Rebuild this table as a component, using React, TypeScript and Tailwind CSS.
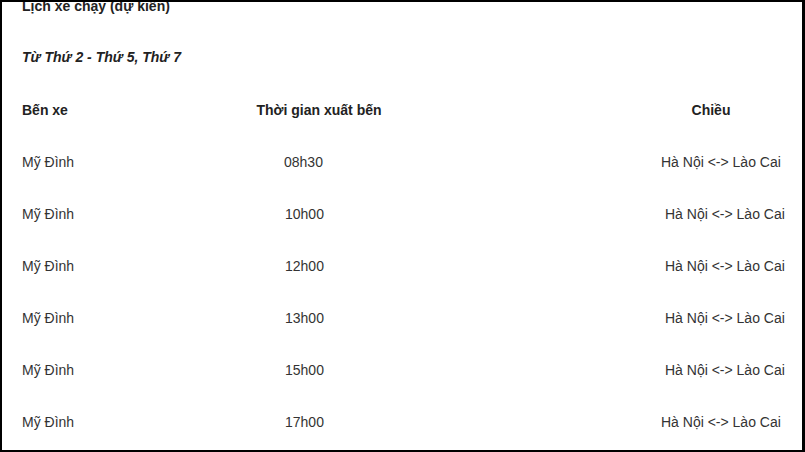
import React from "react";

const rows = [
  { time: "08h30", shift: false },
  { time: "10h00", shift: true },
  { time: "12h00", shift: true },
  { time: "13h00", shift: true },
  { time: "15h00", shift: true },
  { time: "17h00", shift: false },
];

export default function App() {
  return (
    <div
      className="w-[805px] h-[452px] overflow-hidden bg-white border-l-2 border-t-2 border-r-[3px] border-b-2 border-black text-[14px] text-[#333]"
      style={{ fontFamily: '"Liberation Sans", Arial, sans-serif' }}
    >
      <div className="pl-[20px] -mt-[6px] leading-5 font-bold text-[#222]">
        Lịch xe chạy (dự kiến)
      </div>
      <div className="pl-[20px] mt-[31px] leading-5 font-bold italic text-[#222]">
        Từ Thứ 2 - Thứ 5, Thứ 7
      </div>
      <div className="flex pl-[20px] mt-[33px] leading-5 font-bold text-[#222]">
        <div className="w-[200px]">Bến xe</div>
        <div className="w-[194px] text-center">Thời gian xuất bến</div>
        <div className="w-[225px]" />
        <div className="w-[140px] text-center">Chiều</div>
      </div>
      {rows.map((r, i) => (
        <div
          key={i}
          className={`flex pl-[20px] leading-5 ${i === 0 ? "mt-[32px]" : "mt-[32px]"}`}
        >
          <div className="w-[200px]">Mỹ Đình</div>
          <div className={`w-[194px] ${r.time === "08h30" ? "pl-[62px]" : "pl-[63px]"}`}>{r.time}</div>
          <div className="w-[225px]" />
          <div className={`w-[160px] whitespace-nowrap ${r.shift ? "pl-[24px]" : "pl-[20px]"}`}>
            Hà Nội &lt;-&gt; Lào Cai
          </div>
        </div>
      ))}
    </div>
  );
}
